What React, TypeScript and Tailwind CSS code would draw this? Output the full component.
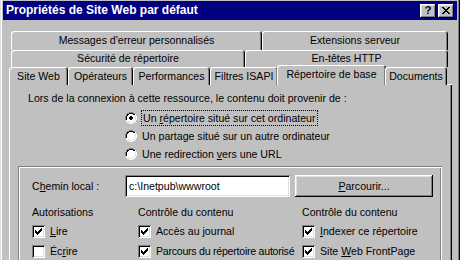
import { ReactNode } from 'react';

const raised =
  'shadow-[inset_-1px_-1px_#000,inset_1px_1px_#fff,inset_-2px_-2px_#808080,inset_2px_2px_#dfdfdf]';
const sunken =
  'shadow-[inset_1px_1px_#808080,inset_-1px_-1px_#fff,inset_2px_2px_#000,inset_-2px_-2px_#dfdfdf]';

const Tab = ({
  label,
  className,
}: {
  label: ReactNode;
  className: string;
}) => {
  return (
    <div
      className={`flex shrink-0 items-center justify-center rounded-t-[3px] bg-[#c0c0c0] shadow-[inset_1px_1px_#fff,inset_-1px_0_#000,inset_-2px_0_#808080] ${className}`}
    >
      {label}
    </div>
  );
};

const Radio = ({ checked }: { checked?: boolean }) => {
  return (
    <svg width="12" height="12" viewBox="0 0 12 12" className="shrink-0">
      <path d="M4 0h4v1h2v1h1v2h1v4h-1v2h-1v1h-2v1h-4v-1h-2v-1h-1v-2h-1v-4h1v-2h1v-1h2z" fill="#fff" />
      <path d="M4 0h4v1h-4zM2 1h2v1h-2zM8 1h2v1h-2zM1 2h1v2h-1zM0 4h1v4h-1z" fill="#808080" />
      <path d="M4 1h4v1h-4zM2 2h2v1h-2zM8 2h2v1h-2zM2 3h1v1h-1zM1 4h1v4h-1z" fill="#000" />
      <path d="M10 2h1v2h-1zM11 4h1v4h-1zM10 8h1v2h-1zM8 10h2v1h-2zM2 10h2v1h-2zM4 11h4v1h-4zM1 8h1v2h-1z" fill="#fff" />
      <path d="M10 4h1v4h-1zM9 8h1v2h-1zM8 9h1v1h-1zM4 10h4v1h-4zM2 9h2v1h-2z" fill="#dfdfdf" />
      {checked && <path d="M5 4h2v1h1v2h-1v1h-2v-1h-1v-2h1z" fill="#000" />}
    </svg>
  );
};

const Check = ({ checked }: { checked?: boolean }) => {
  return (
    <div className={`flex h-[13px] w-[13px] shrink-0 items-center justify-center bg-white ${sunken}`}>
      {checked && (
        <svg width="7" height="7" viewBox="0 0 7 7">
          <path
            d="M6 0h1v3h-1v1h-1v1h-1v1h-1v1h-1v-1h-1v-1h-1v-3h1v1h1v1h1v-1h1v-1h1v-1h1z"
            fill="#000"
          />
        </svg>
      )}
    </div>
  );
};

const CheckRow = ({ checked, label }: { checked?: boolean; label: ReactNode }) => {
  return (
    <div className="flex h-[20px] items-center gap-[5px]">
      <Check checked={checked} />
      <span className="whitespace-nowrap">{label}</span>
    </div>
  );
};

export default function App() {
  return (
    <div
      className="h-[260px] w-[460px] overflow-hidden bg-[#c0c0c0] pl-[3px] pr-[3px] pt-[1px] text-[10.6px] leading-[13px] text-black shadow-[inset_1px_0_#dfdfdf,inset_2px_0_#fff,inset_-1px_0_#000,inset_-2px_0_#808080]"
      style={{ fontFamily: '"Liberation Sans", Arial, sans-serif' }}
    >
      {/* barre de titre */}
      <div className="flex h-[19px] items-center justify-between bg-[#000080] pl-[3px] pr-[3px]">
        <span className="text-[12px] font-bold text-white">Propriétés de Site Web par défaut</span>
        <div className="flex gap-[2px]">
          <div className={`flex h-[14px] w-[16px] items-center justify-center bg-[#c0c0c0] text-[11px] font-bold ${raised}`}>
            ?
          </div>
          <div className={`flex h-[14px] w-[16px] items-center justify-center bg-[#c0c0c0] ${raised}`}>
            <svg width="8" height="7" viewBox="0 0 8 7">
              <path
                d="M0 0h2v1h1v1h2v-1h1v-1h2v1h-1v1h-1v1h-1v1h1v1h1v1h1v1h-2v-1h-1v-1h-2v1h-1v1h-2v-1h1v-1h1v-1h1v-1h-1v-1h-1v-1h-1z"
                fill="#000"
              />
            </svg>
          </div>
        </div>
      </div>

      {/* onglets */}
      <div className="mt-[11px] flex h-[19px] pl-[8px]">
        <Tab className="h-[19px] w-[251px]" label="Messages d'erreur personnalisés" />
        <Tab className="h-[19px] w-[186px]" label="Extensions serveur" />
      </div>
      <div className="flex h-[15px] pl-[8px]">
        <Tab className="h-[17px] w-[234px]" label="Sécurité de répertoire" />
        <Tab className="h-[17px] w-[203px]" label="En-têtes HTTP" />
      </div>
      <div className="relative z-10 -mb-[1px] flex h-[20px] items-end pl-[6px]">
        <Tab className="h-[18px] w-[59px] pt-[1px]" label="Site Web" />
        <Tab className="h-[18px] w-[65px] pt-[1px]" label="Opérateurs" />
        <Tab className="h-[18px] w-[77px] pt-[1px]" label="Performances" />
        <Tab className="h-[18px] w-[68px] pt-[1px]" label="Filtres ISAPI" />
        <Tab className="-mx-[1px] h-[20px] w-[109px] pb-[1px]" label="Répertoire de base" />
        <Tab className="h-[18px] w-[62px] pt-[1px]" label="Documents" />
      </div>

      {/* panneau */}
      <div className="ml-[6px] h-[180px] w-[443px] shadow-[inset_1px_1px_#fff,inset_-1px_0_#000,inset_-2px_0_#808080]">
        <div className="pl-[19px] pt-[8px]">
          Lors de la connexion à cette ressource, le contenu doit provenir de :
        </div>
        <div className="mt-[3px] flex flex-col pl-[116px]">
          <div className="flex h-[19px] items-center gap-[4px]">
            <Radio checked />
            <span className="border border-dotted border-black px-[1px] leading-[14px]">
              Un <u>r</u>épertoire situé sur cet ordinateur
            </span>
          </div>
          <div className="flex h-[18px] items-center gap-[5px]">
            <Radio />
            <span>Un partage situé sur un autre ordinateur</span>
          </div>
          <div className="flex h-[18px] items-center gap-[5px]">
            <Radio />
            <span>
              Une redirection <u>v</u>ers une URL
            </span>
          </div>
        </div>

        {/* cadre */}
        <div className="ml-[9px] mt-[3px] h-[120px] w-[424px] pl-[14px] pt-[9px] shadow-[inset_1px_1px_#808080,inset_2px_2px_#fff,inset_-1px_-1px_#fff,inset_-2px_-2px_#808080]">
          <div className="flex items-center">
            <span className="w-[93px]">
              C<u>h</u>emin local :
            </span>
            <div className={`flex h-[22px] w-[165px] items-center bg-white pl-[4px] ${sunken}`}>
              c:\Inetpub\wwwroot
            </div>
            <div className={`ml-[5px] flex h-[22px] w-[138px] items-center justify-center ${raised}`}>
              <span>
                <u>P</u>arcourir...
              </span>
            </div>
          </div>
          <div className="mt-[9px] flex">
            <div className="w-[106px]">
              <div>Autorisations</div>
              <div className="mt-[2px]">
                <CheckRow checked label={<><u>L</u>ire</>} />
                <CheckRow label={<>Éc<u>r</u>ire</>} />
              </div>
            </div>
            <div className="w-[164px]">
              <div>Contrôle du contenu</div>
              <div className="mt-[2px]">
                <CheckRow checked label="Accès au journal" />
                <CheckRow
                  checked
                  label={<span className="tracking-[-0.25px]">Parcours du répertoire autorisé</span>}
                />
              </div>
            </div>
            <div>
              <div>Contrôle du contenu</div>
              <div className="mt-[2px]">
                <CheckRow checked label={<><u>I</u>ndexer ce répertoire</>} />
                <CheckRow checked label={<>Site <u>W</u>eb FrontPage</>} />
              </div>
            </div>
          </div>
        </div>
      </div>
    </div>
  );
}
